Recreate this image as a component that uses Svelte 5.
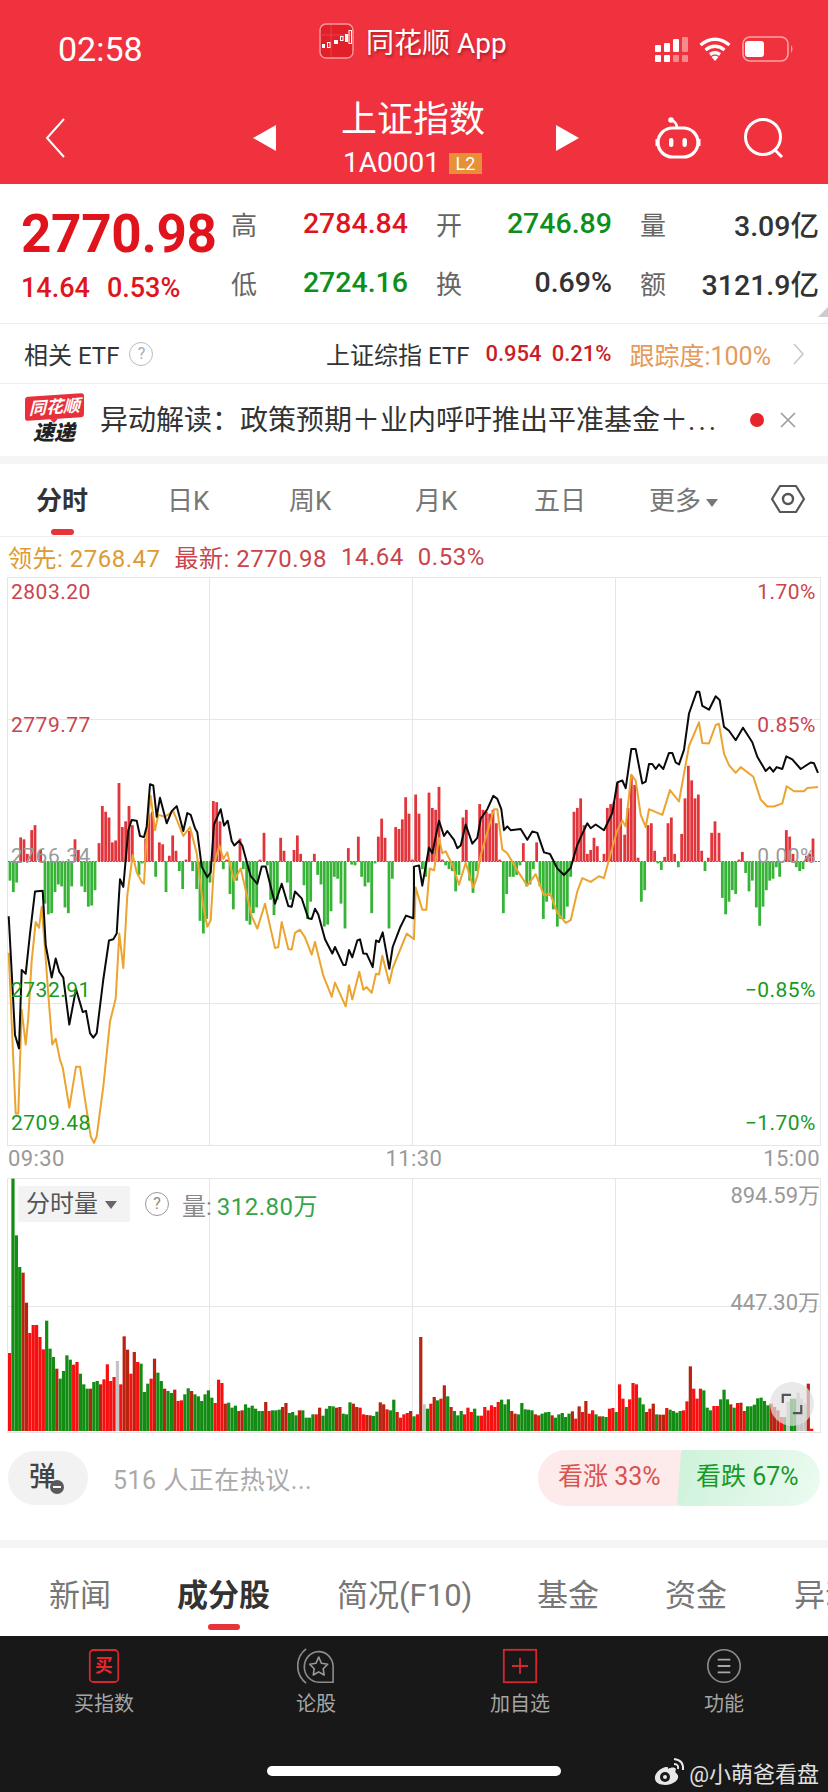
<script>
  const W = 3.37;
  const toLeft = (pts) => pts.map(([x, y]) => [x / 3, 570 + y / 2.613]);
  const toRight = (pts) => pts.map(([x, y]) => [414 + x / 3, 570 + y / 2.613]);
  const line = (pts) => pts.map(([x, y]) => `${x.toFixed(1)},${y.toFixed(1)}`).join(" ");

  const black = [
    ...toLeft([[26,905],[38,1100],[45,1215],[57,1250],[65,1045],[77,1055],[90,950],[105,840],[128,838],[137,980],[155,1065],[167,1015],[178,1050],[190,1065],[208,1188],[228,1095],[248,1155],[258,1152],[270,1210],[280,1222],[290,1210],[310,1070],[327,968],[340,965],[350,950],[360,808],[370,828],[385,680],[395,653],[410,655],[420,695],[432,698],[440,670],[450,560],[460,563],[470,645],[480,595],[500,662],[515,630],[530,617],[550,682],[562,635],[572,640],[585,675],[592,685],[605,775],[622,803],[632,790],[642,665],[662,625],[672,668],[683,655],[695,708],[703,720],[717,708],[727,720],[752,800],[772,820],[785,775],[797,775],[825,872],[845,820],[865,878],[875,880],[885,840],[905,858],[925,910],[935,912],[945,885],[955,900],[975,965],[997,1002],[1005,985],[1030,1032],[1037,1032],[1047,993],[1057,1012],[1072,968],[1080,965],[1090,1002],[1100,1003],[1118,1038],[1128,968],[1137,972],[1148,947],[1168,1042],[1178,985],[1200,935],[1218,903],[1240,910],[1242,835]]),
    ...toRight([[0,775],[15,772],[25,825],[45,725],[55,740],[75,655],[90,695],[100,682],[120,705],[130,727],[140,720],[155,665],[175,715],[190,700],[200,650],[220,625],[238,590],[250,598],[262,625],[270,680],[280,670],[290,680],[320,677],[340,705],[355,683],[370,687],[390,738],[408,742],[430,780],[450,797],[470,778],[490,718],[510,680],[520,662],[530,675],[545,665],[570,680],[595,635],[610,555],[625,550],[635,570],[652,468],[665,468],[685,558],[695,553],[705,507],[715,507],[725,520],[735,508],[748,520],[765,478],[775,478],[785,503],[795,508],[810,470],[825,375],[848,318],[856,318],[865,355],[885,365],[905,330],[917,340],[930,410],[945,420],[965,445],[987,412],[1015,450],[1030,488],[1055,525],[1067,515],[1078,527],[1088,515],[1105,520],[1117,487],[1135,495],[1160,520],[1190,503],[1200,505],[1212,530]])
  ];

  const orange = [
    ...toLeft([[26,1000],[40,1280],[47,1420],[55,1420],[65,1150],[77,1240],[85,1170],[95,1020],[107,920],[117,935],[125,880],[135,990],[145,1110],[157,1240],[167,1225],[180,1280],[188,1300],[208,1405],[228,1298],[240,1298],[258,1400],[272,1480],[282,1497],[290,1480],[310,1350],[330,1180],[347,1120],[358,950],[370,1040],[382,850],[398,745],[410,790],[425,815],[432,820],[440,690],[452,590],[465,680],[475,640],[495,645],[520,630],[550,695],[570,672],[590,740],[610,880],[622,932],[632,915],[642,770],[658,720],[670,755],[682,738],[702,812],[722,780],[755,905],[772,937],[795,872],[825,988],[835,985],[845,920],[865,990],[875,992],[885,948],[900,940],[915,960],[935,1005],[945,972],[970,1060],[995,1115],[1005,1078],[1037,1140],[1047,1085],[1057,1122],[1078,1050],[1090,1097],[1100,1090],[1115,1105],[1128,1055],[1137,1057],[1147,1008],[1168,1080],[1178,1040],[1220,950],[1235,960],[1242,965]]),
    ...toRight([[0,960],[5,830],[25,888],[37,888],[47,780],[60,785],[75,700],[85,740],[95,735],[115,770],[135,822],[155,765],[178,830],[190,800],[200,745],[240,625],[250,625],[265,730],[280,740],[310,785],[340,825],[365,795],[390,850],[408,845],[430,895],[455,922],[470,915],[490,840],[505,805],[530,815],[555,800],[570,805],[590,740],[610,680],[625,655],[635,670],[652,535],[665,550],[680,640],[695,672],[705,625],[745,640],[768,575],[795,605],[825,460],[855,398],[865,452],[885,453],[905,405],[915,402],[930,480],[945,510],[965,530],[980,515],[1018,540],[1040,600],[1060,618],[1080,618],[1105,610],[1118,565],[1140,578],[1170,578],[1180,570],[1212,567]])
  ];

  // net inflow bars, zoom x then signed height in zoom px
  const flowLeft = [[30,-50],[40,-80],[50,-55],[62,63],[72,58],[82,20],[95,82],[105,95],[122,30],[135,-110],[145,-138],[155,-135],[165,-80],[175,-60],[185,-65],[195,-120],[205,-135],[215,-65],[225,58],[235,30],[245,-65],[255,-80],[265,-118],[275,-115],[285,-75],[297,48],[307,145],[317,130],[327,115],[337,50],[347,55],[357,205],[367,90],[377,105],[387,145],[397,95],[417,-35],[427,-5],[437,60],[447,125],[457,130],[467,-40],[478,50],[488,45],[498,-80],[508,15],[518,68],[528,28],[538,-25],[548,-72],[558,5],[568,80],[578,-25],[590,-72],[600,-155],[610,-188],[620,-150],[630,-55],[640,158],[650,155],[660,105],[670,-20],[680,5],[690,-85],[700,-125],[710,-50],[720,60],[730,-20],[740,-155],[750,-165],[760,-135],[770,-120],[780,5],[792,75],[802,-10],[812,-100],[822,-140],[832,-100],[842,62],[852,28],[862,-55],[872,-100],[882,30],[892,68],[902,20],[912,-62],[922,-150],[932,-105],[943,20],[953,-35],[963,-60],[973,-170],[983,-165],[993,-130],[1003,-40],[1013,-45],[1023,-110],[1035,-175],[1045,35],[1055,-8],[1065,-10],[1075,65],[1085,-40],[1095,-65],[1105,-55],[1115,-135],[1125,-5],[1135,65],[1145,112],[1155,62],[1167,-175],[1177,-45],[1187,90],[1197,85],[1207,110],[1217,168],[1227,125],[1237,5]];
  const flowRight = [[5,175],[15,125],[25,-20],[35,-40],[45,180],[55,140],[65,135],[75,195],[85,5],[95,-10],[105,-20],[115,-25],[125,-78],[135,-35],[147,115],[157,135],[167,-50],[177,-82],[187,-25],[197,150],[207,135],[217,130],[227,125],[237,135],[247,100],[257,5],[268,-135],[278,-85],[288,-40],[298,-40],[308,-35],[318,-10],[328,48],[338,-65],[348,-60],[358,-20],[368,50],[378,-65],[388,-150],[398,-105],[408,-90],[418,-125],[430,-170],[440,-150],[450,-150],[460,-118],[470,-40],[480,130],[490,140],[500,165],[510,95],[520,20],[530,30],[540,62],[550,40],[570,20],[580,140],[590,150],[600,155],[610,205],[620,165],[632,70],[642,140],[652,225],[662,200],[672,10],[682,-105],[692,-75],[702,95],[712,100],[722,28],[732,-5],[742,-22],[752,12],[762,100],[772,115],[782,20],[793,-15],[803,72],[813,165],[823,250],[833,212],[843,165],[853,175],[863,28],[873,-25],[883,10],[893,75],[903,105],[915,75],[925,-95],[935,-138],[945,-105],[955,-75],[965,-85],[975,5],[985,25],[995,-30],[1005,-78],[1015,-50],[1027,-120],[1037,-168],[1047,-118],[1057,-75],[1067,-50],[1077,-45],[1087,-15],[1097,-40],[1117,82],[1127,65],[1137,20],[1147,-15],[1157,-25],[1167,-20],[1177,15],[1187,20],[1197,60]];
  const flow = [
    ...flowLeft.map(([x, h]) => ({ x: x / 3, h: h / 2.613 })),
    ...flowRight.map(([x, h]) => ({ x: 414 + x / 3, h: h / 2.613 }))
  ];

  // volume bars, top y in zoom px, baseline 812
  const volLeft = "r578 g55 g225 g320 b337 b427 r518 r494 r494 r530 r567 g481 g565 g590 b625 g655 g632 g585 g598 r613 r605 g640 g672 g685 b685 g665 g662 b672 r657 r612 r662 r650 s602 r672 b528 b568 r640 b575 r605 g610 g695 g670 r655 b595 g637 g662 b685 g692 g698 b688 r722 r720 g702 g684 b692 g702 g708 g722 g702 g690 g712 r728 r658 r668 b730 g727 g742 g736 b752 b750 g732 g742 g736 g745 g752 g752 b725 r752 g750 g750 g748 b740 b728 g758 g755 g765 b750 g750 g772 g772 g762 r762 b742 g766 g745 g737 g738 b742 b740 g760 g762 g726 b730 b740 r742 r762 b764 b765 g767 g754 b726 b732 r747 g750 g718 b755 r772 r762 r758 b752 g768";
  const volRight = "r762 b530 s732 g745 r730 b710 g720 r715 b675 g708 b740 g752 g765 g752 r762 r742 r755 g745 g766 r766 r740 r750 r735 r740 r725 g718 g732 g717 b752 b760 g762 g728 g747 g748 g750 b762 r765 g760 g756 g755 b765 g772 g762 g758 g770 g760 b753 r775 b738 r755 b722 r760 r750 g762 b768 g768 g770 r745 r743 g755 r672 r715 g740 r717 r668 r672 g712 g732 b755 r745 b730 g762 b763 b763 r743 g748 g752 g757 g752 r750 r723 b618 r685 r715 r685 g690 g742 g750 r737 r737 g717 g688 g717 b732 g742 r728 b727 r752 g738 g738 g733 g714 g712 g722 g735 b730 b740 b750 r770 g770 s725 g715 g715 s697 s715 s730 b670 r805";
  const volColor = { r: "#f81010", g: "#128c12", b: "#b8240f", s: "#c4c4c4" };
  const vols = [...volLeft.split(" "), ...volRight.split(" ")].map((s, i) => ({
    x: 8 + i * W,
    h: (812 - Number(s.slice(1))) / 3,
    c: volColor[s[0]]
  }));

  const tabs = ["日K", "周K", "月K", "五日"];
  const bottomTabs = ["简况(F10)", "基金", "资金", "异动"];
</script>

<div class="page">
  <header class="top">
    <div class="status">
      <span class="time">02:58</span>
      <div class="app">
        <svg viewBox="0 0 35 36" width="35" height="36">
          <rect x="1" y="1" width="33" height="34" rx="6" fill="#e2202a" stroke="#f79a9e" stroke-width="1.4" />
          <path d="M1 12 H34" stroke="#ee4a50" stroke-width="0.8" />
          <path d="M12 2 V34" stroke="#ee4a50" stroke-width="0.8" />
          <g fill="#fff">
            <rect x="3" y="21" width="3" height="4" />
            <rect x="15" y="17" width="4" height="4" />
            <rect x="26" y="11" width="3" height="8" />
          </g>
          <g fill="none" stroke="#fff" stroke-width="1">
            <rect x="8.5" y="19.5" width="2.5" height="5" />
            <rect x="21.5" y="13.5" width="2.5" height="4" />
            <rect x="30" y="7.5" width="2.5" height="13" />
          </g>
        </svg>
        <span class="app-name">同花顺 App</span>
      </div>
      <div class="status-icons">
        <svg viewBox="0 0 33 26" width="33" height="26">
          <g fill="#fff">
            <rect x="0" y="9" width="6" height="7" rx="1" />
            <rect x="0" y="19" width="6" height="7" rx="1" />
            <rect x="9" y="7" width="6" height="9" rx="1" />
            <rect x="9" y="19" width="6" height="7" rx="1" />
            <rect x="18" y="3" width="6" height="13" rx="1" />
          </g>
          <g fill="#f58a8d">
            <rect x="18" y="19" width="6" height="7" rx="1" />
            <rect x="27" y="1" width="6" height="15" rx="1" />
            <rect x="27" y="19" width="6" height="7" rx="1" />
          </g>
        </svg>
        <svg viewBox="0 0 32 24" width="32" height="24">
          <path d="M1.5 8 Q16 -3.5 30.5 8 M6.5 13 Q16 5.5 25.5 13 M11 17.5 Q16 14 21 17.5" fill="none" stroke="#fff" stroke-width="3.4" />
          <path d="M12.5 20 L16 24 L19.5 20 Q16 17.5 12.5 20Z" fill="#fff" />
        </svg>
        <svg viewBox="0 0 52 26" width="52" height="26">
          <rect x="1" y="1" width="45" height="24" rx="7" fill="none" stroke="#f8a3a6" stroke-width="1.6" />
          <rect x="3" y="5" width="19" height="16" rx="3" fill="#fff" />
          <path d="M49 9 Q52 13 49 17Z" fill="#f8a3a6" />
        </svg>
      </div>
    </div>
    <div class="nav">
      <svg viewBox="0 0 22 40" width="22" height="40">
        <path d="M20 1 L3 20 L20 39" fill="none" stroke="#fff" stroke-width="2" />
      </svg>
      <div class="nav-mid">
        <span class="arrow arrow-left"></span>
        <div class="title">
          <div class="title-name">上证指数</div>
          <div class="title-code">1A0001<span class="l2">L2</span></div>
        </div>
        <span class="arrow arrow-right"></span>
      </div>
      <div class="nav-icons">
        <svg viewBox="0 0 46 42" width="46" height="42">
          <rect x="3" y="11" width="40" height="29" rx="14.5" fill="none" stroke="#fff" stroke-width="3.2" />
          <path d="M1.5 22 V29 M44.5 22 V29" stroke="#fff" stroke-width="2" />
          <path d="M22 11 Q22 5 16 3" fill="none" stroke="#fff" stroke-width="2.6" />
          <circle cx="16" cy="3" r="2.8" fill="#fff" />
          <rect x="14" y="21" width="4.4" height="9" rx="2.2" fill="#fff" />
          <rect x="27.5" y="21" width="4.4" height="9" rx="2.2" fill="#fff" />
        </svg>
        <svg viewBox="0 0 40 40" width="40" height="40">
          <circle cx="19" cy="19" r="17.5" fill="none" stroke="#fff" stroke-width="3" />
          <path d="M30 31 L38 39" stroke="#fff" stroke-width="3" />
        </svg>
      </div>
    </div>
  </header>

  <section class="quote">
    <div class="quote-main">
      <div class="price red">2770.98</div>
      <div class="change red"><span>14.64</span><span>0.53%</span></div>
    </div>
    <div class="stats">
      <span class="lab">高</span><span class="val red">2784.84</span>
      <span class="lab">开</span><span class="val green">2746.89</span>
      <span class="lab">量</span><span class="val dark">3.09亿</span>
      <span class="lab">低</span><span class="val green">2724.16</span>
      <span class="lab">换</span><span class="val dark">0.69%</span>
      <span class="lab">额</span><span class="val dark">3121.9亿</span>
    </div>
    <span class="corner"></span>
  </section>

  <section class="etf">
    <span class="etf-lab">相关 ETF</span>
    <span class="help">?</span>
    <span class="etf-name">上证综指 ETF</span>
    <span class="etf-num">0.954</span>
    <span class="etf-num">0.21%</span>
    <span class="etf-track">跟踪度:100%</span>
    <svg viewBox="0 0 12 22" width="12" height="22"><path d="M1 1 L10 11 L1 21" fill="none" stroke="#c8c8c8" stroke-width="1.6" /></svg>
  </section>

  <section class="news">
    <div class="news-logo">
      <span class="news-logo-top">同花顺</span>
      <span class="news-logo-bot">速递</span>
    </div>
    <span class="news-text">异动解读：政策预期＋业内呼吁推出平准基金＋<span class="dots">...</span></span>
    <span class="dot"></span>
    <svg viewBox="0 0 16 16" width="16" height="16"><path d="M1 1 L15 15 M15 1 L1 15" stroke="#9a9a9a" stroke-width="1.6" /></svg>
  </section>

  <nav class="periods">
    <span class="period active">分时</span>
    {#each tabs as t}
      <span class="period">{t}</span>
    {/each}
    <span class="period more">更多<i></i></span>
    <svg viewBox="0 0 34 30" width="34" height="30">
      <path d="M9 2 H25 L33 15 L25 28 H9 L1 15 Z" fill="none" stroke="#555" stroke-width="2.2" stroke-linejoin="round" />
      <circle cx="17" cy="15" r="5" fill="none" stroke="#555" stroke-width="2.4" />
    </svg>
  </nav>

  <div class="legend">
    <span class="lead">领先: 2768.47</span>
    <span class="latest">最新: 2770.98</span>
    <span class="latest">14.64</span>
    <span class="latest">0.53%</span>
  </div>

  <div class="charts">
    <svg class="plot" viewBox="0 0 828 870" width="828" height="870">
      <g stroke="#e6e6e6" stroke-width="1" fill="none">
        <rect x="7.5" y="7.5" width="813" height="568" />
        <path d="M7.5 149.5 H820 M7.5 433.5 H820 M209.5 7 V575 M412.5 7 V575 M615.5 7 V575" />
        <rect x="7.5" y="608.5" width="813" height="254" />
        <path d="M7.5 736.5 H820 M209.5 608 V862 M412.5 608 V862 M615.5 608 V862" />
      </g>
      <path d="M8 291.5 H820" stroke="#777" stroke-width="1" stroke-dasharray="2 1" />
      <g transform="translate(0,-570)">
        {#each flow as b}
          <rect x={b.x - 1.4} y={b.h > 0 ? 861.5 - b.h : 861.5} width="2.8" height={Math.abs(b.h)} fill={b.h > 0 ? "#e2353b" : "#37b437"} />
        {/each}
        <polyline points={line(orange)} fill="none" stroke="#eba42f" stroke-width="2" stroke-linejoin="round" />
        <polyline points={line(black)} fill="none" stroke="#0a0a0a" stroke-width="2" stroke-linejoin="round" />
      </g>
      {#each vols as v}
        <rect x={v.x} y={861 - v.h} width={W - 0.15} height={v.h} fill={v.c} />
      {/each}
    </svg>

    <span class="axis up" style="top:10px;left:11px">2803.20</span>
    <span class="axis up" style="top:143px;left:11px">2779.77</span>
    <span class="axis flat" style="top:274px;left:11px">2766.34</span>
    <span class="axis down" style="top:408px;left:11px">2732.91</span>
    <span class="axis down" style="top:541px;left:11px">2709.48</span>
    <span class="axis up rt" style="top:10px">1.70%</span>
    <span class="axis up rt" style="top:143px">0.85%</span>
    <span class="axis flat rt" style="top:274px">0.00%</span>
    <span class="axis down rt" style="top:408px">−0.85%</span>
    <span class="axis down rt" style="top:541px">−1.70%</span>

    <div class="times"><span>09:30</span><span>11:30</span><span>15:00</span></div>

    <div class="vol-head">
      <span class="vol-select">分时量<i></i></span>
      <span class="help vol-help">?</span>
      <span class="vol-lab">量:</span>
      <span class="vol-num">312.80万</span>
    </div>
    <span class="vol-axis" style="top:613px">894.59万</span>
    <span class="vol-axis" style="top:720px">447.30万</span>
    <div class="expand">
      <svg viewBox="0 0 26 26" width="24" height="24">
        <path d="M3 12 V3 H12 M23 14 V23 H14" fill="none" stroke="#555" stroke-width="2.4" />
      </svg>
    </div>
  </div>

  <section class="talk">
    <div class="danmu">弹<i></i></div>
    <span class="talk-text">516 人正在热议...</span>
    <div class="vote">
      <span class="vote-up">看涨 33%</span>
      <span class="vote-down">看跌 67%</span>
    </div>
  </section>

  <nav class="tabs">
    <span class="tab">新闻</span>
    <span class="tab active">成分股</span>
    {#each bottomTabs as t}
      <span class="tab">{t}</span>
    {/each}
  </nav>

  <footer class="bar">
    <div class="actions">
      <div class="action">
        <svg viewBox="0 0 36 40" width="32" height="36">
          <rect x="2" y="2" width="32" height="36" rx="4" fill="none" stroke="#d7262c" stroke-width="2" />
          <text x="18" y="27" text-anchor="middle" class="buy-glyph">买</text>
        </svg>
        <span>买指数</span>
      </div>
      <div class="action">
        <svg viewBox="0 0 42 40" width="38" height="36">
          <path d="M40 38 H24 A16 17 0 1 1 40 20 Z" fill="none" stroke="#8c8c8c" stroke-width="1.8" />
          <path d="M10 39 A24 24 0 0 1 10 1" fill="none" stroke="#8c8c8c" stroke-width="1.8" />
          <path d="M24 10 L27 17 L34 18 L29 23 L30 30 L24 26.5 L18 30 L19 23 L14 18 L21 17 Z" fill="none" stroke="#9a9a9a" stroke-width="1.8" stroke-linejoin="round" />
        </svg>
        <span>论股</span>
      </div>
      <div class="action">
        <svg viewBox="0 0 40 40" width="36" height="36">
          <rect x="2" y="2" width="36" height="36" fill="none" stroke="#d7262c" stroke-width="2" />
          <path d="M20 11 V29 M11 20 H29" stroke="#d7262c" stroke-width="2" />
        </svg>
        <span>加自选</span>
      </div>
      <div class="action">
        <svg viewBox="0 0 40 40" width="36" height="36">
          <circle cx="20" cy="20" r="18" fill="none" stroke="#8c8c8c" stroke-width="1.8" />
          <path d="M13 13 H27 M13 20 H27 M13 27 H27" stroke="#a8a8a8" stroke-width="2" />
        </svg>
        <span>功能</span>
      </div>
    </div>
    <div class="home"></div>
    <div class="weibo">
      <svg viewBox="0 0 32 30" width="32" height="30">
        <path d="M13 10 C7 11 1 17 2 22 C3 28 12 29 18 27 C24 25 27 20 24 17 C22 15 22 15 23 12 C22 10 18 10 15 12 C15 10 15 10 13 10Z" fill="#e8e8e8" />
        <circle cx="12" cy="20" r="5" fill="#1a1a1a" />
        <circle cx="12" cy="20" r="2" fill="#e8e8e8" />
        <path d="M21 2 Q31 3 30 13 M21 7 Q26 7 25 12" fill="none" stroke="#e8e8e8" stroke-width="2" />
      </svg>
      <span>@小萌爸看盘</span>
    </div>
  </footer>
</div>

<style>
  :global(body) {
    margin: 0;
    background: #fff;
  }

  .page {
    width: 828px;
    height: 1792px;
    overflow: hidden;
    display: flex;
    flex-direction: column;
    font-family: Roboto, "Noto Sans CJK SC", sans-serif;
    color: #333;
  }

  .top {
    height: 184px;
    background: #ef323e;
    color: #fff;
    flex: none;
  }

  .status {
    height: 84px;
    display: grid;
    grid-template-columns: 261px auto 1fr;
    align-items: center;
    padding: 14px 34px 0 58px;
    box-sizing: border-box;
  }

  .time {
    font-size: 34px;
  }

  .app {
    display: flex;
    align-items: center;
    gap: 12px;
    margin-top: -16px;
    text-shadow: 1px 2px 3px rgba(90, 0, 0, 0.45);
  }

  .app-name {
    font-size: 28px;
    white-space: nowrap;
  }

  .status-icons {
    display: flex;
    justify-content: flex-end;
    align-items: center;
    gap: 11px;
  }

  .nav {
    height: 100px;
    display: flex;
    align-items: center;
    padding: 8px 44px 0 44px;
    box-sizing: border-box;
  }

  .nav-mid {
    width: 326px;
    display: flex;
    align-items: center;
    justify-content: space-between;
    margin-left: 187px;
  }

  .arrow {
    width: 0;
    height: 0;
    border-top: 13px solid transparent;
    border-bottom: 13px solid transparent;
  }

  .arrow-left {
    border-right: 23px solid #fff;
  }

  .arrow-right {
    border-left: 23px solid #fff;
  }

  .title {
    text-align: center;
    margin-top: -1px;
  }

  .title-name {
    font-size: 36px;
    line-height: 48px;
    margin: 0 6px 3px 0;
    height: 48px;
  }

  .title-code {
    font-size: 28px;
    line-height: 32px;
    height: 32px;
    display: flex;
    align-items: center;
    gap: 9px;
    margin-left: 2px;
  }

  .l2 {
    background: #e89038;
    font-size: 18px;
    width: 33px;
    height: 21px;
    line-height: 21px;
    text-align: center;
  }

  .nav-icons {
    margin-left: auto;
    display: flex;
    align-items: center;
    gap: 43px;
  }

  .red {
    color: #e0141c;
  }

  .green {
    color: #0d8f1b;
  }

  .dark {
    color: #333;
  }

  .quote {
    position: relative;
    height: 140px;
    flex: none;
    display: flex;
    border-bottom: 1px solid #eee;
    box-sizing: border-box;
    padding-left: 21px;
  }

  .quote-main {
    width: 210px;
    flex: none;
  }

  .price {
    font-size: 53px;
    font-weight: 700;
    line-height: 56px;
    margin-top: 22px;
    letter-spacing: -0.3px;
  }

  .change {
    display: flex;
    gap: 17px;
    font-size: 27px;
    font-weight: 500;
    margin-top: 10px;
    line-height: 32px;
  }

  .stats {
    display: grid;
    grid-template-columns: 26px 151px 54px 150px 54px 153px;
    grid-template-rows: 59px 59px;
    margin-top: 10px;
    align-items: center;
    flex: none;
  }

  .lab {
    font-size: 26px;
    color: #666;
    justify-self: end;
  }

  .val {
    font-size: 28.5px;
    text-align: right;
    font-weight: 500;
    white-space: nowrap;
  }

  .corner {
    position: absolute;
    right: 0;
    bottom: 6px;
    width: 0;
    height: 0;
    border-left: 10px solid transparent;
    border-bottom: 10px solid #ccc;
  }

  .etf {
    height: 60px;
    flex: none;
    display: flex;
    align-items: center;
    padding: 0 23px 0 24px;
    border-bottom: 1px solid #eee;
    box-sizing: border-box;
    font-size: 24px;
  }

  .help {
    display: inline-block;
    width: 22px;
    height: 22px;
    border: 1.5px solid #bbb;
    border-radius: 50%;
    text-align: center;
    line-height: 22px;
    font-size: 16px;
    color: #aaa;
    margin-left: 10px;
  }

  .etf-name {
    margin-left: auto;
    margin-right: 16px;
  }

  .etf-num {
    color: #c81e28;
    font-weight: 500;
    font-size: 22px;
    margin-right: 10px;
  }

  .etf-track {
    color: #e59a5a;
    font-size: 25px;
    margin-left: 8px;
    margin-right: 22px;
  }

  .news {
    height: 72px;
    flex: none;
    display: flex;
    align-items: center;
    padding: 0 32px 0 24px;
    border-bottom: 8px solid #f5f5f5;
  }

  .news-logo {
    width: 60px;
    display: flex;
    flex-direction: column;
    align-items: center;
    flex: none;
  }

  .news-logo-top {
    position: relative;
    background: #e8303a;
    color: #fff;
    font-size: 17px;
    font-weight: 700;
    font-style: italic;
    width: 59px;
    height: 24px;
    line-height: 24px;
    text-align: center;
    border-radius: 3px;
    transform: skewY(-4deg);
  }

  .news-logo-top::after {
    content: "";
    position: absolute;
    left: 25px;
    bottom: -4px;
    border-left: 4px solid transparent;
    border-right: 4px solid transparent;
    border-top: 4px solid #e8303a;
  }

  .news-logo-bot {
    font-size: 21px;
    font-weight: 900;
    font-style: italic;
    color: #222;
    line-height: 23px;
    margin-top: 3px;
  }

  .news-text {
    font-size: 28px;
    margin-left: 16px;
    margin-top: -4px;
    white-space: nowrap;
    flex: 1;
    color: #333;
  }

  .dots {
    letter-spacing: 3px;
  }

  .dot {
    width: 14px;
    height: 14px;
    border-radius: 50%;
    background: #e5242c;
    margin-right: 16px;
  }

  .periods {
    height: 73px;
    flex: none;
    position: relative;
    display: grid;
    grid-template-columns: 131px 122px 126px 119px 115px 122px 34px;
    align-items: center;
    padding: 0 0 3px 36px;
    box-sizing: border-box;
    border-bottom: 1px solid #eee;
  }

  .period {
    font-size: 26px;
    color: #777;
  }

  .period.active {
    color: #333;
    font-weight: 700;
  }

  .period.active::after {
    content: "";
    position: absolute;
    left: 51px;
    bottom: 1px;
    width: 23px;
    height: 6px;
    border-radius: 3px;
    background: #e5343a;
  }

  .more i {
    display: inline-block;
    margin-left: 5px;
    vertical-align: 3px;
    border-left: 6px solid transparent;
    border-right: 6px solid transparent;
    border-top: 8px solid #777;
  }

  .legend {
    height: 39px;
    flex: none;
    display: flex;
    align-items: center;
    gap: 14px;
    padding-left: 8px;
    font-size: 24px;
    letter-spacing: 0.5px;
    box-sizing: border-box;
  }

  .lead {
    color: #dd9a35;
  }

  .latest {
    color: #c9444c;
  }

  .charts {
    position: relative;
    height: 870px;
    flex: none;
    margin-top: -6px;
  }

  .plot {
    position: absolute;
    left: 0;
    top: 0;
  }

  .axis {
    position: absolute;
    font-size: 21px;
    line-height: 24px;
    letter-spacing: 0.5px;
  }

  .axis.rt {
    right: 12px;
  }

  .up {
    color: #c9444c;
  }

  .down {
    color: #179a1f;
  }

  .flat {
    color: #9a9a9a;
  }

  .times {
    position: absolute;
    top: 576px;
    left: 8px;
    width: 812px;
    display: flex;
    justify-content: space-between;
    font-size: 22px;
    line-height: 26px;
    color: #999;
    letter-spacing: 0.4px;
  }

  .vol-head {
    position: absolute;
    left: 18px;
    top: 616px;
    display: flex;
    align-items: center;
    height: 36px;
  }

  .vol-select {
    width: 112px;
    height: 36px;
    background: #f3f3f3;
    font-size: 24px;
    line-height: 36px;
    padding-left: 8px;
    box-sizing: border-box;
    color: #555;
  }

  .vol-select i {
    display: inline-block;
    margin-left: 7px;
    vertical-align: 3px;
    border-left: 6px solid transparent;
    border-right: 6px solid transparent;
    border-top: 8px solid #666;
  }

  .vol-help {
    margin-left: 15px;
    color: #888;
    border-color: #999;
  }

  .vol-lab {
    font-size: 24px;
    color: #888;
    margin-left: 13px;
  }

  .vol-num {
    font-size: 24px;
    color: #37a347;
    margin-left: 5px;
    letter-spacing: 0.5px;
  }

  .vol-axis {
    position: absolute;
    right: 8px;
    font-size: 22px;
    line-height: 26px;
    color: #999;
  }

  .expand {
    position: absolute;
    left: 770px;
    top: 812px;
    width: 44px;
    height: 44px;
    border-radius: 50%;
    background: rgba(225, 225, 225, 0.72);
    display: flex;
    align-items: center;
    justify-content: center;
  }

  .talk {
    height: 108px;
    flex: none;
    display: flex;
    align-items: center;
    padding: 0 8px 24px 8px;
    box-sizing: border-box;
    border-bottom: 8px solid #f5f5f5;
  }

  .danmu {
    position: relative;
    width: 80px;
    height: 54px;
    border-radius: 27px;
    background: #f2f2f2;
    font-size: 27px;
    font-weight: 500;
    color: #444;
    line-height: 52px;
    padding-left: 21px;
    box-sizing: border-box;
    flex: none;
  }

  .danmu i {
    position: absolute;
    left: 42px;
    bottom: 11px;
    width: 14px;
    height: 14px;
    border-radius: 50%;
    background: #5a5a5a;
  }

  .danmu i::after {
    content: "";
    position: absolute;
    left: 3px;
    top: 6px;
    width: 8px;
    height: 2px;
    background: #fff;
  }

  .talk-text {
    margin-left: 25px;
    font-size: 25px;
    color: #aaa;
    letter-spacing: 0.5px;
  }

  .vote {
    margin-left: auto;
    display: flex;
    font-size: 25px;
  }

  .vote-up,
  .vote-down {
    height: 56px;
    line-height: 54px;
    box-sizing: border-box;
    white-space: nowrap;
  }

  .vote-up {
    width: 144px;
    padding-left: 20px;
    background: #fdeaea;
    color: #d9534f;
    border-radius: 28px 4px 4px 28px;
    clip-path: polygon(0 0, 100% 0, 97% 100%, 0 100%);
  }

  .vote-down {
    width: 143px;
    margin-left: -5px;
    padding-left: 19px;
    background: linear-gradient(110deg, #cdf2da, #ecfbf0);
    color: #189a2a;
    border-radius: 4px 28px 28px 4px;
    clip-path: polygon(3% 0, 100% 0, 100% 100%, 0 100%);
  }

  .tabs {
    height: 88px;
    flex: none;
    display: grid;
    grid-template-columns: 128px 160px 200px 128px 129px 80px;
    align-items: center;
    padding-left: 49px;
    white-space: nowrap;
    overflow: hidden;
    position: relative;
    box-sizing: border-box;
  }

  .tab {
    font-size: 31px;
    color: #777;
  }

  .tab.active {
    color: #333;
    font-weight: 700;
  }

  .tab.active::after {
    content: "";
    position: absolute;
    left: 208px;
    bottom: 6px;
    width: 32px;
    height: 6px;
    border-radius: 3px;
    background: #e5343a;
  }

  .bar {
    flex: 1;
    background: #181818;
    position: relative;
  }

  .actions {
    display: grid;
    grid-template-columns: 208px 216px 192px 216px;
    padding-top: 12px;
  }

  .action {
    display: flex;
    flex-direction: column;
    align-items: center;
    gap: 8px;
    font-size: 20px;
    line-height: 24px;
    color: #a5a5a5;
  }

  .buy-glyph {
    font-size: 20px;
    font-weight: 700;
    fill: #e5262c;
  }

  .home {
    position: absolute;
    left: 267px;
    top: 130px;
    width: 294px;
    height: 10px;
    border-radius: 5px;
    background: #fff;
  }

  .weibo {
    position: absolute;
    right: 9px;
    top: 120px;
    display: flex;
    align-items: center;
    gap: 4px;
    font-size: 22px;
    color: #e0e0e0;
  }
</style>
